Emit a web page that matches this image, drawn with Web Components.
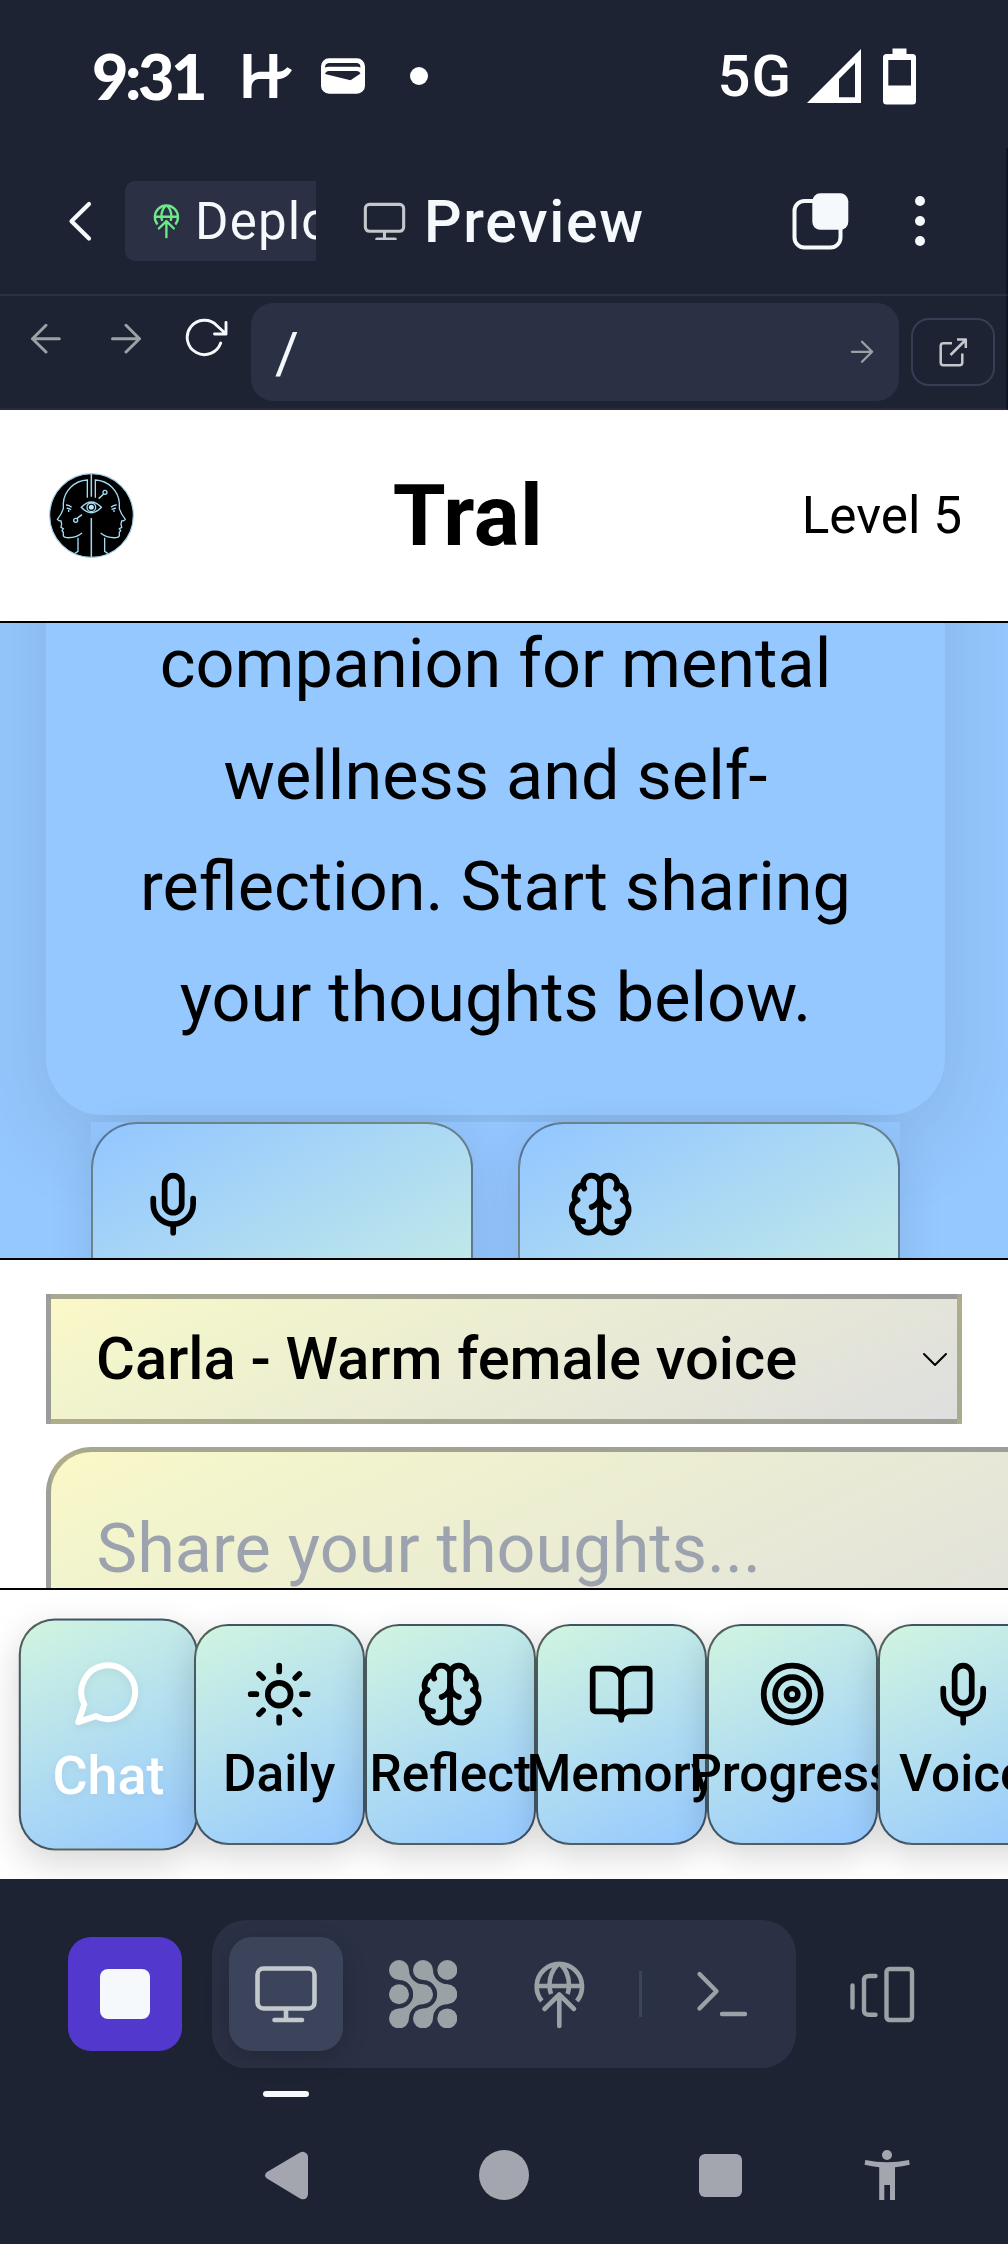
<!DOCTYPE html>
<html lang="en">
<head>
<meta charset="utf-8">
<title>Tral</title>
<style>
html,body{margin:0;padding:0}
body{width:1008px;height:2244px;overflow:hidden;background:#1d2332;font-family:Roboto,"Liberation Sans",sans-serif;color:#000}
</style>
</head>
<body>
<phone-screen></phone-screen>
<script>
const lucide = (inner) => [0, 0, 24, 24, `<g fill="none" stroke="currentColor" stroke-width="2" stroke-linecap="round" stroke-linejoin="round">${inner}</g>`];
const line = (w, inner, cap = 'round') => `<g fill="none" stroke="currentColor" stroke-width="${w}" stroke-linecap="${cap}" stroke-linejoin="round">${inner}</g>`;
const half = `<path d="M142 95V42C103 44 72 74 70 112V128C66 142 60 150 52 160Q56 165 63 165L65 174L63 184L70 188L66 194L70 199V209Q71 214 80 215C98 216 114 211 126 201M114 215V256L104 263M78 117Q87 116 95 124M80 127Q87 126 93 131M86 131V138"/>`;
// Each entry: view box x, y, width, height, markup. The box size is also the natural size.
const ICONS = {
  mic: lucide('<path d="M12 19v3M19 10v2a7 7 0 0 1-14 0v-2"/><rect x="9" y="2" width="6" height="13" rx="3"/>'),
  brain: lucide('<path d="M12 5a3 3 0 1 0-5.997.125 4 4 0 0 0-2.526 5.77 4 4 0 0 0 .556 6.588A4 4 0 1 0 12 18Z"/><path d="M12 5a3 3 0 1 1 5.997.125 4 4 0 0 1 2.526 5.77 4 4 0 0 1-.556 6.588A4 4 0 1 1 12 18Z"/><path d="M15 13a4.5 4.5 0 0 1-3-4 4.5 4.5 0 0 1-3 4M17.599 6.5a3 3 0 0 0 .399-1.375M6.003 5.125A3 3 0 0 0 6.401 6.5M3.477 10.896a4 4 0 0 1 .585-.396M19.938 10.5a4 4 0 0 1 .585.396M6 18a4 4 0 0 1-1.967-.516M19.967 17.484A4 4 0 0 1 18 18"/>'),
  chat: lucide('<path d="M7.9 20A9 9 0 1 0 4 16.1L2 22Z"/>'),
  sun: lucide('<circle cx="12" cy="12" r="4"/><path d="M12 2v2M12 20v2M4.93 4.93l1.41 1.41M17.66 17.66l1.41 1.41M2 12h2M20 12h2M6.34 17.66l-1.41 1.41M19.07 4.93l-1.41 1.41"/>'),
  book: lucide('<path d="M12 7v14M3 18a1 1 0 0 1-1-1V4a1 1 0 0 1 1-1h5a4 4 0 0 1 4 4 4 4 0 0 1 4-4h5a1 1 0 0 1 1 1v13a1 1 0 0 1-1 1h-6a3 3 0 0 0-3 3 3 3 0 0 0-3-3z"/>'),
  target: lucide('<circle cx="12" cy="12" r="10"/><circle cx="12" cy="12" r="6"/><circle cx="12" cy="12" r="2"/>'),
  hmark: [243, 53, 50, 46, '<path fill="currentColor" d="M243.500 54H251.500V75.500C254 73 257 71.700 261 71.700H269.300V54H277.300V71.700C281.500 71.700 284.500 70.500 287.300 67.300L292 70C288.500 76 284 79 277.300 79.200V98H269.300V79H260C255 79 252 81.500 251.500 87V98H243.500Z"/>'],
  wallet: [321, 58, 44, 36, '<path fill="currentColor" fill-rule="evenodd" d="M329 58.300H357A8 8 0 0 1 365 66.300V85.700A8 8 0 0 1 357 93.700H329A8 8 0 0 1 321 85.700V66.300A8 8 0 0 1 329 58.300ZM329 63Q325 63.300 325 67.500Q327 66.700 329 66.700H357Q359 66.700 360.500 67.500Q360.500 63.300 357 63ZM329 71Q326 71 325 74L350.500 80.300L360.500 73.500Q359.500 71 357 71Z"/>'],
  signal: [807, 48, 54, 54, '<path fill="currentColor" fill-rule="evenodd" d="M807 102L861 48V102ZM839 78V96.300H855V62Z"/>'],
  battery: [883, 47, 33, 57, '<path fill="currentColor" fill-rule="evenodd" d="M892.500 47.500H906.500V53H912.500Q916 53 916 56.500V100Q916 103.500 912.500 103.500H886.500Q883 103.500 883 100V56.500Q883 53 886.500 53H892.500ZM888.300 59V84.500H911V59Z"/>'],
  back: [67, 200, 26, 43, line(4.2, '<path d="M89 204L71.500 221.300L89 238.500"/>')],
  globe: [533, 1959, 53, 70, line(4.6, '<path d="M541.800 2001A22.700 22.700 0 1 1 576.900 2001" stroke-linecap="butt"/><path d="M538 1986H581M558 1964C551 1971 549.500 1978 549.500 1985Q549.500 1990 551 1994M560.600 1964C567.600 1971 569 1978 569 1985Q569 1990 567.600 1994" stroke-linecap="butt"/><path d="M559.300 1996V2026M544.500 2009L559.300 1994.500L574 2009"/>')],
  monitor: [254, 1965, 64, 58, line(4.6, '<rect x="257.500" y="1968.500" width="57" height="40" rx="6"/><path d="M286 2009V2019M274.500 2020H302"/>')],
  copy: [792, 192, 58, 57, '<rect x="794.500" y="200" width="46" height="46.500" rx="10" fill="none" stroke="currentColor" stroke-width="4"/><rect x="812.300" y="192.300" width="36" height="36.500" rx="8" fill="currentColor"/>'],
  dots: [914, 195, 12, 52, '<g fill="currentColor"><circle cx="920" cy="201" r="5"/><circle cx="920" cy="221" r="5"/><circle cx="920" cy="241" r="5"/></g>'],
  left: [30, 322, 32, 31, line(3, '<path d="M59.300 337.700H32.500M46 324.300L32.500 337.700L46 351"/>')],
  right: [110, 322, 32, 31, line(3, '<path d="M112.500 337.700H139.500M126 324.300L139.500 337.700L126 351"/>')],
  reload: [185, 318, 44, 40, line(2.9, '<path d="M220.700 343A17.200 17.200 0 1 1 217 325.700L226 334M226 322.500V334H214.500"/>')],
  popout: [938, 337, 30, 31, line(2.5, '<path d="M952 343.300H943.500Q940.700 343.300 940.700 346V362.500Q940.700 365.300 943.500 365.300H959.500Q962.300 365.300 962.300 362.500V353.500M957 339.500H965.800V348M965 340.500L950.500 355" stroke-linecap="butt"/>')],
  chevron: [922, 1352, 26, 15, line(2, '<path d="M924 1354L935 1365L946 1354"/>')],
  nodes: [389, 1960, 68, 68.500, '<g fill="currentColor"><circle cx="399" cy="1970" r="10"/><circle cx="423" cy="1970" r="10"/><circle cx="447.300" cy="1970" r="10"/><circle cx="399" cy="1994.200" r="10"/><circle cx="423" cy="1994.200" r="10"/><circle cx="447.300" cy="1994.200" r="10"/><circle cx="399" cy="2018.400" r="10"/><circle cx="423" cy="2018.400" r="10"/><circle cx="447.300" cy="2018.400" r="10"/><path d="M409 1970A14.200 14.200 0 0 0 423 1984.200V2004.200A14.200 14.200 0 0 0 409 2018.400L399 2008.400A14.200 14.200 0 0 0 399 1980Z"/><path d="M433 1970A14.300 14.200 0 0 0 447.300 1984.200V2004.200A14.300 14.200 0 0 0 433 2018.400L423 2008.400A14.200 14.200 0 0 0 423 1980Z"/></g>'],
  terminal: [696, 1970, 52, 48, line(4.4, '<path d="M699.500 1974L716.500 1991.300L699.500 2008.500M722 2014H745"/>')],
  devices: [849, 1966, 66, 57, line(4.4, '<path d="M852.500 1985.500V2007.500M875.500 1976H869Q864 1976 864 1980.500V2010.500Q864 2014.800 869 2014.800H875.500"/><rect x="886.500" y="1969" width="25.500" height="51" rx="3"/>')],
  navback: [264, 2150, 45, 51, '<path d="M305 2152.500Q308 2154 308 2157V2194Q307.500 2200 302 2199.300L300 2198.500L267 2178.500Q263 2175.500 267 2172L300 2152.500Q303 2151 305 2152.500Z" fill="currentColor"/>'],
  person: [864, 2150, 47, 52, '<g fill="currentColor"><circle cx="887" cy="2156" r="5"/><path d="M865.300 2161Q887 2165.500 909 2161L909.700 2165.800Q902 2167.600 895 2168.300V2201H890V2186H884.300V2201H879.200V2168.300Q872 2167.600 864.600 2165.800Z"/></g>'],
  logo: [27, 21, 255, 255, `<circle cx="154.500" cy="148.500" r="125.500" fill="#000" stroke="#9fd0e8" stroke-width="3.500"/><g fill="none" stroke="#a3dbf5" stroke-width="4">${half}<g transform="translate(308 0) scale(-1 1)">${half}</g><path d="M154 24V92M154 156V274M124 124Q154 92 184 124Q154 156 124 124ZM191 84L176 98M110 158L126 146" stroke-width="4.500"/><circle cx="154" cy="124" r="13"/><circle cx="195" cy="79" r="6"/><circle cx="107" cy="163" r="6"/></g><circle cx="154" cy="124" r="7.500" fill="#b9e8ff"/>`]
};

class UiElement extends HTMLElement {
  constructor() { super(); this.attachShadow({ mode: 'open' }); }
  connectedCallback() { this.shadowRoot.innerHTML = `<style>*{box-sizing:border-box}${this.css()}</style>${this.html()}`; }
}
const define = (name, css, html) => customElements.define(name, class extends UiElement {
  css() { return typeof css === 'function' ? css(this) : css; }
  html() { return typeof html === 'function' ? html(this) : html; }
});

define('ui-icon', ':host{display:block;flex:none}svg{display:block}', (el) => {
  const [x, y, w, h, body] = ICONS[el.getAttribute('name')];
  const width = +(el.getAttribute('width') || w);
  return `<svg width="${width}" height="${width * h / w}" viewBox="${x} ${y} ${w} ${h}" aria-hidden="true">${body}</svg>`;
});

define('status-bar', `
:host{display:flex;align-items:center;height:148px;padding:4px 92px 0 92px;color:#fff;box-sizing:border-box}
.time{font:900 63px/70px Lato,sans-serif;width:151px;white-space:nowrap;letter-spacing:-3.500px}
.dot{width:18px;height:18px;border-radius:50%;background:#fff;margin-left:45px}
.net{font:500 58px/64px Roboto,sans-serif;margin-left:auto;margin-right:15px;letter-spacing:1px}
`, `<span class="time">9:31</span><ui-icon name="hmark"></ui-icon><ui-icon name="wallet" style="margin-left:28px"></ui-icon><span class="dot"></span>
<span class="net">5G</span><ui-icon name="signal"></ui-icon><ui-icon name="battery" style="margin-left:22px"></ui-icon>`);

define('tab-strip', `
:host{display:flex;align-items:center;height:148px;border-bottom:2px solid #2b3045;border-right:2px solid #0e1525;padding-left:67px;color:#f5f9fc;box-sizing:border-box}
.tab{display:flex;align-items:center;width:191px;height:80px;margin-left:32px;padding-left:28px;overflow:hidden;background:#2b3044;border-radius:10px 0 0 10px;white-space:nowrap;font:400 51px/60px Roboto,sans-serif}
.tab span{margin-left:15px;padding-top:1px;letter-spacing:1.200px}
.title{font:500 59px/70px Roboto,sans-serif;margin-left:18px;padding-top:1px;letter-spacing:1.700px}
`, `<ui-icon name="back"></ui-icon><div class="tab"><ui-icon name="globe" width="27" style="color:#6fe88a"></ui-icon><span>Deploy</span></div>
<ui-icon name="monitor" width="43" style="margin-left:47px;color:#c2c8cc"></ui-icon><span class="title">Preview</span>
<ui-icon name="copy" style="margin-left:auto"></ui-icon><ui-icon name="dots" style="margin:0 80px 0 64px"></ui-icon>`);

define('address-bar', `
:host{display:flex;align-items:center;height:114px;border-bottom:2px solid #262b3d;border-right:2px solid #0e1525;padding-left:30px;color:#9ba2a6;box-sizing:border-box}
.nav{display:flex;align-self:flex-start;align-items:center;margin-top:22px;height:40px}
.url{display:flex;align-items:center;justify-content:space-between;width:648px;height:98px;margin-left:22px;padding:0 25px 0 24px;border-radius:22px;background:#2b3145}
.url span{color:#f5f9fc;font:400 58px/70px Roboto,sans-serif;padding-top:2px}
.open{display:flex;align-items:center;justify-content:center;width:84px;height:68px;margin-left:12px;border:2px solid #363d55;border-radius:18px;color:#c2c8cc}
`, `<div class="nav"><ui-icon name="left"></ui-icon><ui-icon name="right" style="margin-left:48px"></ui-icon><ui-icon name="reload" style="margin-left:43px;color:#f5f9fc"></ui-icon></div>
<div class="url"><span>/</span><ui-icon name="right" width="24"></ui-icon></div><div class="open"><ui-icon name="popout"></ui-icon></div>`);

define('app-header', `
:host{display:flex;align-items:center;justify-content:space-between;height:213px;padding:0 46px 0 49px;background:#fff;border-bottom:2px solid #000;box-sizing:border-box}
h1{margin:0;font:700 85.500px/100px Roboto,sans-serif;letter-spacing:.5px}
span{font-size:51.300px;line-height:60px}
`, `<ui-icon name="logo" width="85"></ui-icon><h1>Tral</h1><span>Level 5</span>`);

define('quick-card', `
:host{display:block;width:382px;height:228px;padding:46px;border:2px solid rgba(0,0,0,.42);border-radius:45.600px;background:linear-gradient(152deg,#95c8ff 5%,#d1f5e0 110%);box-shadow:0 11px 46px rgba(0,0,0,.1);box-sizing:border-box}
`, (el) => `<ui-icon name="${el.getAttribute('icon')}" width="68.400"></ui-icon>`);

define('chat-feed', `
:host{display:block;height:635px;overflow:hidden;background:#95c8ff}
.welcome{display:flex;flex-direction:column;justify-content:flex-end;width:899px;height:692px;margin:-200px 0 7px 46px;padding:0 57px 61px;border-radius:57px;background:#95c8ff;box-shadow:0 23px 91px rgba(0,0,0,.12);text-align:center;font-size:68.400px;line-height:111.150px}
.welcome span{white-space:nowrap}
.cards{display:flex;justify-content:space-between;width:809px;margin-left:91px;background:#94c5fe}
`, `<div class="welcome"><span>companion for mental</span><span>wellness and self-</span><span>reflection. Start sharing</span><span>your thoughts below.</span></div>
<div class="cards"><quick-card icon="mic"></quick-card><quick-card icon="brain"></quick-card></div>`);

define('message-composer', `
:host{display:block;height:330px;border-top:2px solid #000;padding:34px 0 0 46px;background:#fff;overflow:hidden;box-sizing:border-box}
.voice{display:flex;align-items:center;justify-content:space-between;width:916px;height:130px;border:5px solid rgba(0,0,0,.3);padding:0 9px 0 45px;background:linear-gradient(155deg,#fcf8c7,#f3f5cc 15%,#dedede);font-weight:500;font-size:59.700px;white-space:nowrap}
.entry{display:flex;align-items:center;width:1090px;height:204px;margin-top:23px;border:5px solid rgba(0,0,0,.3);border-radius:45.600px;padding-left:45.600px;background:linear-gradient(155deg,#fcf8c7,#f3f5cc 15%,#dedede);color:#9ca3af;font-size:68.400px}
`, `<div class="voice"><span>Carla - Warm female voice</span><ui-icon name="chevron"></ui-icon></div><div class="entry"><span>Share your thoughts...</span></div>`);

define('nav-item', `
:host{display:flex;flex:none;flex-direction:column;align-items:center;width:171px;height:220.700px;padding-top:34.200px;border:2px solid rgba(0,0,0,.6);border-radius:34.200px;background:linear-gradient(155deg,#d1f5e0,#95c8ff);box-shadow:0 11px 34px rgba(0,0,0,.16);isolation:isolate;white-space:nowrap;box-sizing:border-box}
:host([active]){color:#fff;transform:scale(1.05);text-shadow:0 3px 8px rgba(0,0,0,.05)}
:host([active]) ui-icon{filter:drop-shadow(0 3px 4px rgba(0,0,0,.06))}
span{margin-top:9px;font-weight:500;font-size:51.300px;line-height:71px}
`, (el) => `<ui-icon name="${el.getAttribute('icon')}" width="68.400"></ui-icon><span><slot></slot></span>`);

define('bottom-nav', `
:host{display:flex;height:291px;padding:34px 0 0 22.800px;border-top:2px solid #000;background:#fff;overflow:hidden;box-sizing:border-box}
`, `<nav-item icon="chat" active>Chat</nav-item><nav-item icon="sun">Daily</nav-item><nav-item icon="brain">Reflect</nav-item><nav-item icon="book">Memory</nav-item><nav-item icon="target">Progress</nav-item><nav-item icon="mic">Voice</nav-item>`);

define('tool-dock', `
:host{display:block;height:219px;padding:41px 0 0 68px;box-sizing:border-box;color:#9ba2a6}
.row{display:flex;align-items:center;height:148px}
.stop,.btn{display:flex;align-items:center;justify-content:center;width:114px;height:114px;border-radius:23px;flex:none}
.stop{background:#5238cc}
.stop i{width:50px;height:50px;border-radius:8px;background:#f5f9fc}
.group{display:flex;align-items:center;gap:22.800px;width:584px;height:148px;margin-left:30px;padding:0 17px;border-radius:34px;background:#2b3145}
.on{background:#3c445c;color:#c2c8cc;box-shadow:0 8px 24px rgba(0,0,0,.2)}
.sep{width:3px;height:46px;background:#3c445c}
.mark{width:46px;height:6px;border-radius:3px;background:#f5f9fc;margin:23px 0 0 195px}
`, `<div class="row"><div class="stop"><i></i></div><div class="group"><div class="btn on"><ui-icon name="monitor"></ui-icon></div><div class="btn"><ui-icon name="nodes"></ui-icon></div><div class="btn"><ui-icon name="globe"></ui-icon></div><div class="sep"></div><div class="btn"><ui-icon name="terminal"></ui-icon></div></div>
<div class="btn" style="margin-left:29px"><ui-icon name="devices"></ui-icon></div></div><div class="mark"></div>`);

define('system-nav', `
:host{display:flex;align-items:center;height:146px;padding:8px 97px 0 264px;color:#a3a6af;box-sizing:border-box}
.home{width:50px;height:50px;border-radius:50%;background:#a3a6af;margin-left:170px}
.recent{width:43px;height:43px;border-radius:6px;background:#a3a6af;margin-left:170px}
`, `<ui-icon name="navback"></ui-icon><div class="home"></div><div class="recent"></div><ui-icon name="person" style="margin-left:auto"></ui-icon>`);

define('phone-screen', ':host{display:flex;flex-direction:column;width:1008px;height:2244px;background:#1d2332;overflow:hidden}:host>*{flex:none}',
`<status-bar></status-bar><tab-strip></tab-strip><address-bar></address-bar><app-header></app-header><chat-feed></chat-feed><message-composer></message-composer><bottom-nav></bottom-nav><tool-dock></tool-dock><system-nav></system-nav>`);
</script>
</body>
</html>
